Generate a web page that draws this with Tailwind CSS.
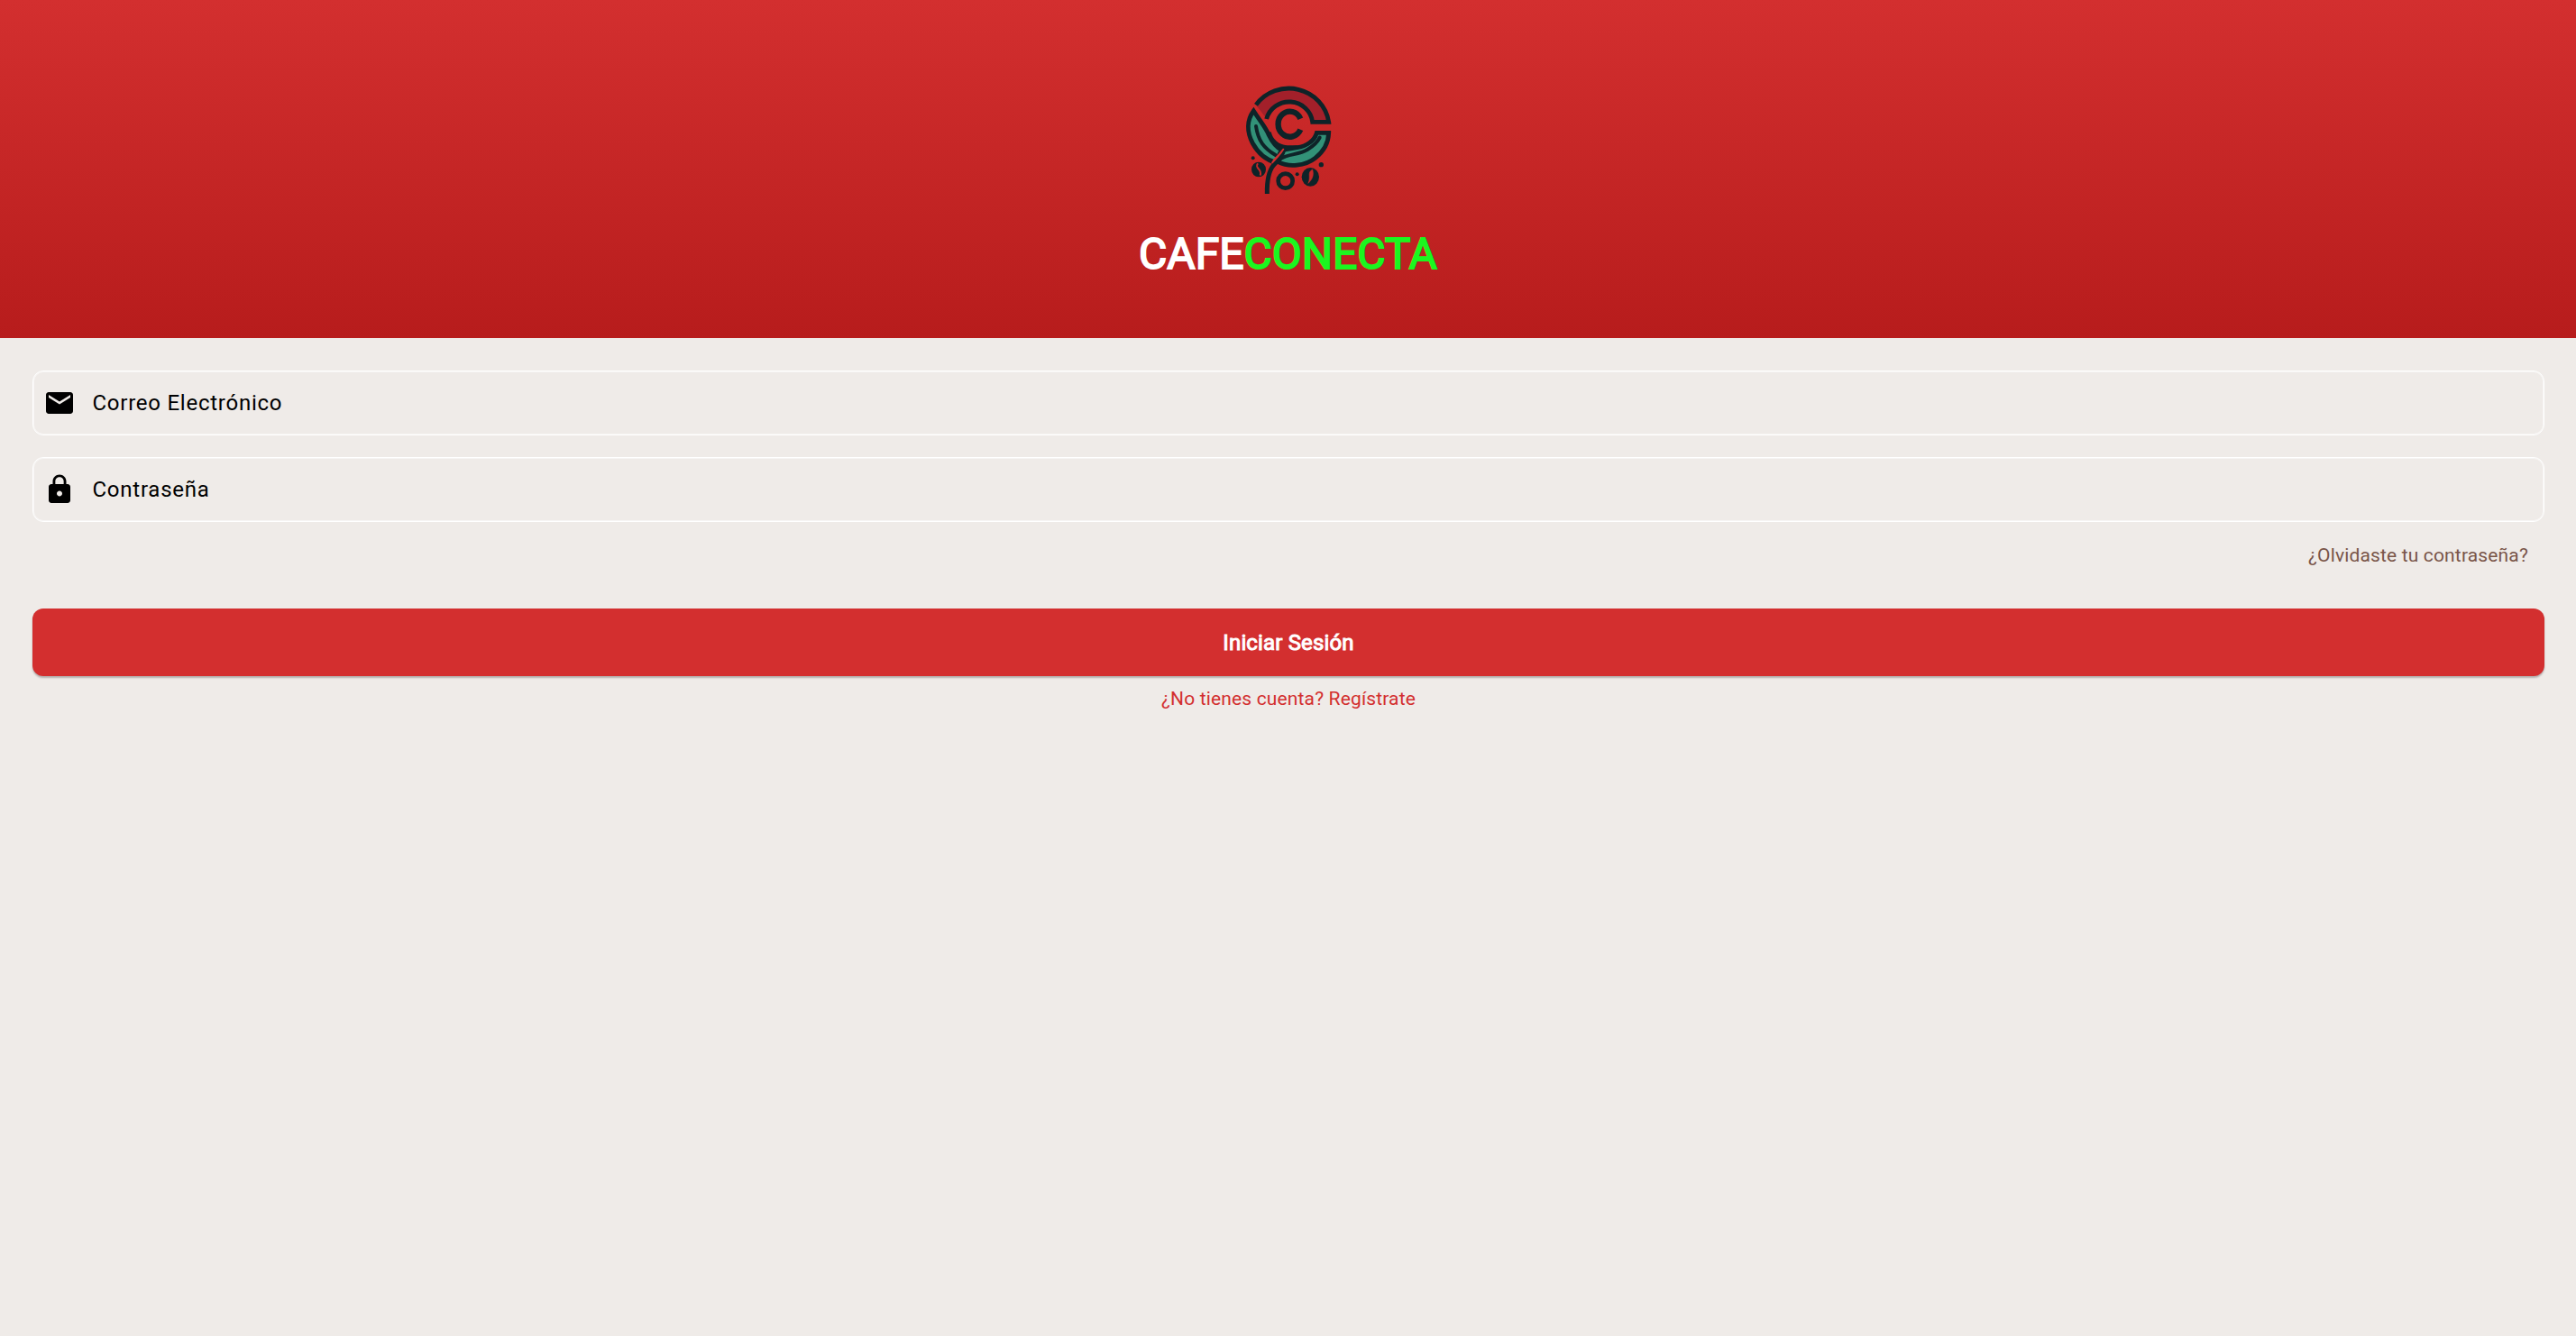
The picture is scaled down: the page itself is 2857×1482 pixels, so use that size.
<!DOCTYPE html>
<html lang="es">
<head>
<meta charset="utf-8">
<title>CafeConecta</title>
<script src="https://cdn.jsdelivr.net/npm/@tailwindcss/browser@4"></script>
</head>
<body class="min-h-screen bg-[#efebe8] font-['Roboto',sans-serif] text-black">
<header class="flex h-[375px] flex-col items-center bg-linear-to-b from-[#d32f2f] to-[#b71c1c] pt-[85px]">
  <svg class="h-[140px] w-[120px] shrink-0" viewBox="-3 0 360 420" fill="none" stroke="#0e2328" stroke-width="14.5">
    <path d="M68 93A134 129 0 0 1 311 151H257A78 76 0 0 0 105 141Z" fill="#a3202a" stroke="none"/>
    <path d="M69 94A134 130 0 0 1 311 151H257A78 76 0 0 0 104 141"/>
    <path d="M61 114C38 145 38 184 58 222C77 256 105 278 134 285L154 244C134 234 124 220 112 195C102 170 84 150 61 114Z" fill="#329178"/>
    <path d="M311 187H271C264 214 236 232 206 236L162 243L143 284C178 302 232 298 266 271C294 249 310 220 311 187Z" fill="#329178"/>
    <path d="M69 165C76 214 96 239 134 261M148 275C180 255 208 262 240 243C260 231 273 220 281 203" stroke-linecap="round" stroke-width="12"/>
    <path d="M112 185C118 212 140 234 172 236H206"/>
    <path d="M217 140A39 42 0 1 0 217 176" stroke-width="19"/>
    <path d="M163 240C154 266 143 278 128 294C111 314 105 342 106 390" stroke-width="15"/>
    <path d="M161 240C155 254 145 263 122 288L128 278C138 268 149 256 161 240Z" fill="#d32f2f" stroke="#d32f2f" stroke-width="5"/>
    <circle cx="167" cy="347" r="24" stroke-width="14"/>
    <g fill="#0e2328" stroke="none">
      <ellipse cx="78" cy="309" rx="24" ry="25"/>
      <ellipse cx="250" cy="334" rx="29" ry="31"/>
      <circle cx="59" cy="271" r="6"/><circle cx="286" cy="293" r="8"/><circle cx="206" cy="325" r="6"/>
    </g>
    <path d="M75 289C63 308 91 304 83 329" stroke="#c62828" stroke-width="6"/>
    <path d="M257 309C238 320 253 332 243 355C254 343 263 332 257 309Z" fill="#c62828" stroke="#c62828" stroke-width="2"/>
  </svg>
  <h1 class="mt-[29px] text-[48px] leading-[56px] font-normal whitespace-nowrap text-white [-webkit-text-stroke:1.8px_currentColor]">CAFE<span class="text-[#1bf61f]">CONECTA</span></h1>
</header>
<main class="flex flex-col pr-[35px] pl-9 pt-9">
  <label class="flex h-[72px] items-center rounded-xl border border-white pl-[11px] shadow-[inset_0_0_0_1px_rgba(255,255,255,0.5)]">
    <svg class="size-9" viewBox="0 0 24 24"><path d="M20 4H4c-1.1 0-1.99.9-1.99 2L2 18c0 1.1.9 2 2 2h16c1.1 0 2-.9 2-2V6c0-1.1-.9-2-2-2zm0 4-8 5-8-5V6l8 5 8-5v2z"/></svg>
    <span class="ml-[18.5px] text-2xl tracking-[0.75px]">Correo Electrónico</span>
  </label>
  <label class="mt-6 flex h-[72px] items-center rounded-xl border border-white pl-[11px] shadow-[inset_0_0_0_1px_rgba(255,255,255,0.5)]">
    <svg class="size-9" viewBox="0 0 24 24"><path d="M18 8h-1V6c0-2.760-2.240-5-5-5S7 3.240 7 6v2H6c-1.100 0-2 .9-2 2v10c0 1.100.9 2 2 2h12c1.100 0 2-.9 2-2V10c0-1.100-.9-2-2-2zm-6 9c-1.100 0-2-.9-2-2s.9-2 2-2 2 .9 2 2-.9 2-2 2zm3.100-9H8.900V6c0-1.710 1.390-3.100 3.100-3.100s3.100 1.390 3.100 3.100v2z"/></svg>
    <span class="ml-[18.5px] text-2xl tracking-[0.75px]">Contraseña</span>
  </label>
  <a class="mt-[25px] self-end pr-[18px] text-[21px] leading-[24px] tracking-[0.15px] text-[#795548]">¿Olvidaste tu contraseña?</a>
  <button class="mt-[47px] h-[75px] rounded-xl bg-[#d32f2f] text-2xl tracking-[0.15px] text-white shadow-[0_2px_2px_rgba(0,0,0,0.25)] [-webkit-text-stroke:1px_currentColor]">Iniciar Sesión</button>
  <a class="mt-[13px] self-center text-[21px] leading-[24px] tracking-[0.15px] text-[#d32f2f]">¿No tienes cuenta? Regístrate</a>
</main>
</body>
</html>
